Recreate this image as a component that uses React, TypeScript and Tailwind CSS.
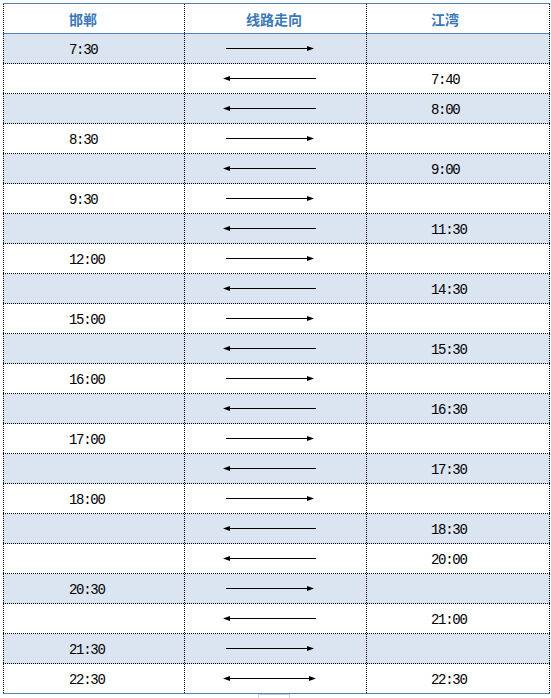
import React from "react";

type Dir = "r" | "l" | "b";

const rows: [string, Dir, string][] = [
  ["7:30", "r", ""],
  ["", "l", "7:40"],
  ["", "l", "8:00"],
  ["8:30", "r", ""],
  ["", "l", "9:00"],
  ["9:30", "r", ""],
  ["", "l", "11:30"],
  ["12:00", "r", ""],
  ["", "l", "14:30"],
  ["15:00", "r", ""],
  ["", "l", "15:30"],
  ["16:00", "r", ""],
  ["", "l", "16:30"],
  ["17:00", "r", ""],
  ["", "l", "17:30"],
  ["18:00", "r", ""],
  ["", "l", "18:30"],
  ["", "l", "20:00"],
  ["20:30", "r", ""],
  ["", "l", "21:00"],
  ["21:30", "r", ""],
  ["22:30", "b", "22:30"],
];

function Arrow({ dir }: { dir: Dir }) {
  return (
    <svg width="94" height="7" viewBox="0 0 94 7" className="block">
      {dir === "r" && (
        <>
          <line x1="3" y1="3.5" x2="86" y2="3.5" stroke="#000" strokeWidth="1.2" />
          <polygon points="84,1 91,3.5 84,6" fill="#000" />
        </>
      )}
      {dir === "l" && (
        <>
          <line x1="6" y1="3.5" x2="93" y2="3.5" stroke="#000" strokeWidth="1.2" />
          <polygon points="7,1 0,3.5 7,6" fill="#000" />
        </>
      )}
      {dir === "b" && (
        <>
          <line x1="6" y1="3.5" x2="87" y2="3.5" stroke="#000" strokeWidth="1.2" />
          <polygon points="7,1 0,3.5 7,6" fill="#000" />
          <polygon points="86,1 93,3.5 86,6" fill="#000" />
        </>
      )}
    </svg>
  );
}

const timeFont =
  "font-['Liberation_Mono','DejaVu_Sans_Mono',monospace] text-[14px] tracking-[-1.3px] text-black";
const headFont =
  "font-['Noto_Sans_CJK_SC','Noto_Sans',sans-serif] text-[14px] font-bold text-[#3a78b8] leading-none";

export default function App() {
  return (
    <div className="w-[551px] h-[698px] bg-white pl-[3px] pt-[3px]">
      <div className="w-[547px]">
        {/* header */}
        <div className="flex h-[31px] border-y border-solid border-[#4f81bd]">
          <div className="w-[182px] h-full flex items-center pl-[65px] border-l border-r border-dotted border-black">
            <span className={headFont}>邯郸</span>
          </div>
          <div className="w-[182px] h-full flex items-center pl-[61px] border-r border-dotted border-black">
            <span className={headFont}>线路走向</span>
          </div>
          <div className="w-[183px] h-full flex items-center pl-[64px] border-r border-dotted border-black">
            <span className={headFont}>江湾</span>
          </div>
        </div>
        {rows.map(([a, d, b], i) => {
          const last = i === rows.length - 1;
          return (
            <div
              key={i}
              className={`flex h-[30px] ${i % 2 === 0 ? "bg-[#dbe5f1]" : "bg-white"} ${
                last
                  ? "border-b border-solid border-[#4f81bd]"
                  : "border-b border-dotted border-black"
              }`}
            >
              <div className="w-[182px] h-full flex items-center pl-[65px] pt-[4px] border-l border-r border-dotted border-black">
                <span className={timeFont}>{a}</span>
              </div>
              <div className="w-[182px] h-full flex items-center pl-[38px] border-r border-dotted border-black">
                <Arrow dir={d} />
              </div>
              <div className="w-[183px] h-full flex items-center pl-[64px] pt-[4px] border-r border-dotted border-black">
                <span className={timeFont}>{b}</span>
              </div>
            </div>
          );
        })}
        <div className="flex pl-[255px]">
          <div className="w-[32px] h-[4px] border-t border-l border-r border-[#d0d0d0]" />
        </div>
      </div>
    </div>
  );
}
